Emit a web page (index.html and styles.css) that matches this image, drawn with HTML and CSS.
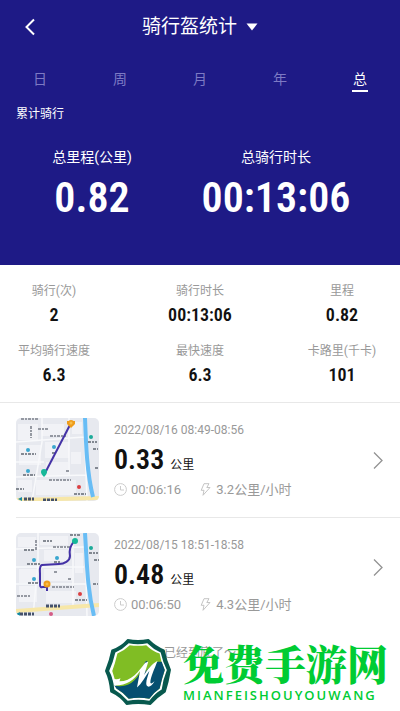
FILE: index.html
```html
<!DOCTYPE html>
<html lang="zh-CN">
<head>
<meta charset="utf-8">
<meta name="viewport" content="width=device-width, initial-scale=1">
<title>骑行盔统计</title>
<link rel="stylesheet" href="styles.css">
</head>
<body>
<header class="hero">
  <div class="titlebar">
    <button class="back" type="button" aria-label="返回">
      <svg width="12" height="18" viewBox="0 0 12 18"><path d="M10 1.500 2.500 9 10 16.500" fill="none" stroke="#fff" stroke-width="2"/></svg>
    </button>
    <button class="title" type="button">骑行盔统计<svg width="12" height="8" viewBox="0 0 12 8"><path d="M.5.500h11L6 7.500z" fill="#fff"/></svg></button>
  </div>
  <nav class="tabs">
    <button type="button">日</button>
    <button type="button">周</button>
    <button type="button">月</button>
    <button type="button">年</button>
    <button type="button" class="active">总</button>
  </nav>
  <h2 class="subtitle">累计骑行</h2>
  <div class="totals">
    <div class="total"><span>总里程(公里)</span><strong>0.82</strong></div>
    <div class="total"><span>总骑行时长</span><strong>00:13:06</strong></div>
  </div>
</header>
<main>
  <section class="stats">
    <div class="stat"><span>骑行(次)</span><strong>2</strong></div>
    <div class="stat"><span>骑行时长</span><strong>00:13:06</strong></div>
    <div class="stat"><span>里程</span><strong>0.82</strong></div>
    <div class="stat"><span>平均骑行速度</span><strong>6.3</strong></div>
    <div class="stat"><span>最快速度</span><strong>6.3</strong></div>
    <div class="stat"><span>卡路里(千卡)</span><strong>101</strong></div>
  </section>
  <ul class="rides">
    <li>
      <a class="ride" href="#ride-0816">
        <svg class="map" viewBox="0 0 83 83" aria-hidden="true">
          <rect width="83" height="83" fill="#e7e9ef"/>
          <g fill="#f1f2f6"><path d="M2 6h20v16H2zM26 6h22v12H26zM3 27h22v20H3zM29 24h24v16H29zM30 44h22v14H30zM55 34h10v12H55zM20 62h40v15H20zM2 62h14v12H2zM56 4h10v12H56z"/></g>
          <g stroke="#f8f9fb" stroke-width="1.500" fill="none"><path d="M0 24 68 19M0 59 70 57M26 0v24L16 83M53 0v58M68 0l3 83M0 44h28"/></g>
          <path d="M0 82 83 80" stroke="#f7e7a8" stroke-width="4"/>
          <path d="M69 0c1 28 2 55 8 79" fill="none" stroke="#68bdf5" stroke-width="4"/>
          <g stroke="#9599a2" stroke-width="2" fill="none" stroke-dasharray="3 1 2 1"><path d="M5 1h18M22 11h10M15 8v12M34 18h16M33 62h22M50 53h4"/></g>
          <g stroke="#626873" stroke-width="1.500" fill="none" stroke-dasharray="3 1 2 1"><path d="M5 36h15M7 57h12M0 71h8M72 24h9M79 50h4M77 31h5M58 76h12M36 35h4"/></g>
          <path d="M8 81h10M27 82h14" stroke="#44516b" stroke-width="3" stroke-dasharray="3 1"/>
          <path d="M2 81l4-2v4z" fill="#1689a0"/>
          <path d="M28 57 55 5" stroke="#4432a6" stroke-width="2"/>
          <g fill="#3aa7cf"><circle cx="12" cy="32" r="2"/><circle cx="12" cy="53" r="2"/><circle cx="38" cy="29" r="2"/></g>
          <circle cx="75" cy="19" r="2" fill="#1cab99"/><circle cx="63" cy="69" r="2" fill="#db3f42"/>
          <path d="M25 54a3 3 0 0 1 6 0c0 2-3 5-3 5s-3-3-3-5z" fill="#16b899"/>
          <path d="M51 3h8v3l-4 4-4-4z" fill="#ef9d1c"/><circle cx="55" cy="5" r="3" fill="#ef9d1c"/><circle cx="55" cy="5" r="1.500" fill="#f7be4a"/>
        </svg>
        <div class="info">
          <time>2022/08/16 08:49-08:56</time>
          <div class="distance"><strong>0.33</strong><span>公里</span></div>
          <div class="meta">
            <svg width="13" height="13" viewBox="0 0 13 13"><g fill="none" stroke="#ccc"><circle cx="6.500" cy="6.500" r="5.900"/><path d="M6.500 3v4h3.500"/></g></svg>
            <span class="duration">00:06:16</span>
            <svg width="13" height="13" viewBox="0 0 13 13"><path d="M5 .7h5L7.800 4.500H11L4 12.300l1-5H2.200z" fill="none" stroke="#c4c4c4" stroke-linejoin="round"/></svg>
            <span>3.2公里/小时</span>
          </div>
        </div>
        <svg class="arrow" width="10" height="17" viewBox="0 0 10 17"><path d="M1 .5 9 8.500 1 16.500" fill="none" stroke="#929292" stroke-width="1.300"/></svg>
      </a>
    </li>
    <li>
      <a class="ride" href="#ride-0815">
        <svg class="map" viewBox="0 0 83 83" aria-hidden="true">
          <rect width="83" height="83" fill="#e7e9ef"/>
          <g fill="#f1f2f6"><path d="M2 4h18v10H2zM24 3h28v9H24zM3 36h18v14H3zM28 36h28v12H28zM59 20h8v20h-8zM30 58h30v12H30zM3 53h18v16H3zM28 17h24v11H28z"/></g>
          <g stroke="#f8f9fb" stroke-width="1.500" fill="none"><path d="M0 16 68 14M0 51h70M22 0v30L17 83M57 0v72M69 0l2 83M0 34h68"/></g>
          <path d="M0 78 83 72" stroke="#f7e7a8" stroke-width="4"/>
          <path d="M69 0c2 30 2 55 9 83" fill="none" stroke="#68bdf5" stroke-width="4"/>
          <g stroke="#9599a2" stroke-width="2" fill="none" stroke-dasharray="3 1 2 1"><path d="M1 63h14M20 7v10M37 14h18M36 54h22M38 39h4M52 46h4"/></g>
          <g stroke="#626873" stroke-width="1.500" fill="none" stroke-dasharray="3 1 2 1"><path d="M54 2h10M27 8h9M8 17h10M11 31h14M12 50h10M38 29h6M73 20h9M78 27h5M77 51h5M59 67h12"/></g>
          <path d="M30 73h14M4 81h14" stroke="#44516b" stroke-width="3" stroke-dasharray="3 1"/>
          <path d="M0 81l4-2v4z" fill="#1689a0"/>
          <path d="M58 8c-4 6-5 9-4 15 0 5-6 8-11 8l-17 1c-3 1-2 5-2 9v11c0 3 2 2 4 2h3v4" fill="none" stroke="#4432a6" stroke-width="2"/>
          <g fill="#3aa7cf"><circle cx="18" cy="27" r="2"/><circle cx="18" cy="46" r="2"/><circle cx="41" cy="25" r="2"/></g>
          <circle cx="75" cy="15" r="2" fill="#1cab99"/><circle cx="64" cy="61" r="2" fill="#db3f42"/><circle cx="35" cy="81" r="2" fill="#d55c86"/>
          <circle cx="59" cy="8" r="3" fill="#16b899"/>
          <circle cx="31" cy="51" r="3.500" fill="#ef9d1c"/><circle cx="31" cy="51" r="1.500" fill="#f7be4a"/>
        </svg>
        <div class="info">
          <time>2022/08/15 18:51-18:58</time>
          <div class="distance"><strong>0.48</strong><span>公里</span></div>
          <div class="meta">
            <svg width="13" height="13" viewBox="0 0 13 13"><g fill="none" stroke="#ccc"><circle cx="6.500" cy="6.500" r="5.900"/><path d="M6.500 3v4h3.500"/></g></svg>
            <span class="duration">00:06:50</span>
            <svg width="13" height="13" viewBox="0 0 13 13"><path d="M5 .7h5L7.800 4.500H11L4 12.300l1-5H2.200z" fill="none" stroke="#c4c4c4" stroke-linejoin="round"/></svg>
            <span>4.3公里/小时</span>
          </div>
        </div>
        <svg class="arrow" width="10" height="17" viewBox="0 0 10 17"><path d="M1 .5 9 8.500 1 16.500" fill="none" stroke="#929292" stroke-width="1.300"/></svg>
      </a>
    </li>
  </ul>
  <p class="end">已经到底了～</p>
</main>
<aside class="watermark">
  <svg width="68" height="68" viewBox="0 0 66 66" aria-hidden="true">
    <path d="M23 2q10 2 20 0 7 7 15 10 2 10 6 19-2 12-5 21-8 5-14 12-12-2-23 0-6-8-15-12-1-12-5-20 4-10 6-20 9-3 15-10z" fill="#08594e" stroke="#08594e" stroke-width="2" stroke-linejoin="round"/>
    <path d="M24 5q9 2 18 0 6 6 13 9 2 9 6 17-4 10-5 19-7 4-12 11-11-2-21 0-6-7-13-11-1-11-5-18 4-9 6-18 7-3 13-9z" fill="#fff"/>
    <path d="M25 7q8 1 16 0 6 6 13 8 1 8 5 16-3 9-5 18-6 4-10 10-10-2-20 0-5-6-12-10-1-9-4-17 3-8 5-17 7-3 12-8z" fill="#80bd24"/>
    <path d="M10 46q20 5 30-23l2-1-2 11q6-7 12-10l4 0 3 8q-3 9-5 18-6 4-10 10-10-2-20 0-5-6-12-10z" fill="#064f70"/>
    <path d="M8 39q4 2 8 0l-1 3c12 0 18-9 25-18l3-1-4 13c4-7 8-11 13-14-3 8-7 16-7 21 0 2 2 1 4-1-3 6-8 7-8 2 0-4 2-8 3-12-4 5-7 12-12 16l3-16c-6 9-13 14-24 14z" fill="#fff"/>
  </svg>
  <div class="brand">
    <span class="brand-name">免费手游网</span>
    <span class="brand-latin">MIANFEISHOUYOUWANG</span>
  </div>
</aside>
</body>
</html>
```
FILE: styles.css
```css
* { box-sizing: border-box; }

body {
  margin: 0;
  min-height: 100vh;
  position: relative;
  background: #fff;
  color: #111;
  font-family: Roboto, "Noto Sans CJK SC", sans-serif;
  font-size: 12px;
  line-height: 20px;
}

button {
  border: 0;
  padding: 0;
  background: none;
  color: inherit;
  font: inherit;
}

svg { display: block; flex: none; }

strong {
  font-family: "Roboto Condensed", Roboto, sans-serif;
  font-weight: 600;
}

.hero {
  min-height: 265px;
  padding-bottom: 44px;
  background: #1e1a86;
  color: #fff;
}

.titlebar {
  display: grid;
  grid-template-columns: 36px 1fr 36px;
  align-items: center;
  height: 54px;
}

.back { justify-self: end; }

.title {
  justify-self: center;
  display: flex;
  align-items: center;
  gap: 9px;
  font-size: 19px;
  line-height: 28px;
}

.tabs {
  display: grid;
  grid-template-columns: repeat(5, 1fr);
  justify-items: center;
  padding-top: 14px;
}

.tabs button {
  height: 24px;
  border-bottom: 2px solid transparent;
  color: #7d7ac4;
  font-size: 14px;
  line-height: 20px;
}

.tabs .active {
  padding: 0 1px;
  border-color: #fff;
  color: #fff;
}

.subtitle {
  margin: 12px 16px 0;
  font-size: 12px;
  font-weight: 400;
  line-height: 20px;
}

.totals {
  display: grid;
  grid-template-columns: 1fr 1fr;
  margin: 23px 32px 0 0;
}

.total {
  display: flex;
  flex-direction: column;
  align-items: center;
}

.total span { font-size: 14px; }

.total strong {
  margin-top: 9px;
  font-size: 42px;
  line-height: 44px;
}

.stats {
  display: grid;
  grid-template-columns: 27fr 46fr 25fr;
  row-gap: 12px;
  padding: 16px 8px 13px 0;
  border-bottom: 1px solid #e8e8e8;
}

.stat {
  display: flex;
  flex-direction: column;
  align-items: center;
  white-space: nowrap;
}

.stat span { color: #999; }

.stat strong {
  font-size: 18px;
  line-height: 28px;
}

.rides {
  margin: 0;
  padding: 0 0 0 16px;
  list-style: none;
}

.rides li + li { border-top: 1px solid #e8e8e8; }

.ride {
  display: flex;
  align-items: center;
  padding-right: 17px;
  color: inherit;
  text-decoration: none;
}

.map {
  width: 83px;
  height: 83px;
  margin: 15px 0 16px;
  border-radius: 5px;
}

.rides li:last-child .map,
.rides li:last-child .info { margin-bottom: 0; }

.info {
  flex: 1;
  margin: 15px 0 16px 15px;
}

.info time {
  display: block;
  height: 24px;
  color: #999;
  line-height: 24px;
}

.distance {
  display: flex;
  align-items: baseline;
  gap: 6px;
  height: 36px;
}

.distance strong {
  font-size: 28px;
  line-height: 36px;
}

.meta {
  display: flex;
  align-items: center;
  gap: 4px;
  height: 23px;
  color: #999;
  font-size: 13px;
}

.duration { margin-right: 14px; }

.end {
  margin: 27px 0 0;
  color: #999;
  text-align: center;
}

/* Site mark laid over the bottom corner of the page */
.watermark {
  position: absolute;
  right: 12px;
  bottom: 5px;
  display: flex;
  align-items: center;
  gap: 11px;
}

.brand {
  display: flex;
  flex-direction: column;
}

.brand-name {
  color: #0c3;
  font-family: "Noto Serif CJK SC", "Noto Sans CJK SC", serif;
  font-size: 41px;
  font-weight: 900;
  line-height: 46px;
}

.brand-latin {
  margin-bottom: 1px;
  color: #0c3;
  font-family: "Open Sans", sans-serif;
  font-size: 13px;
  font-weight: 600;
  letter-spacing: 2px;
  line-height: 18px;
}
```
